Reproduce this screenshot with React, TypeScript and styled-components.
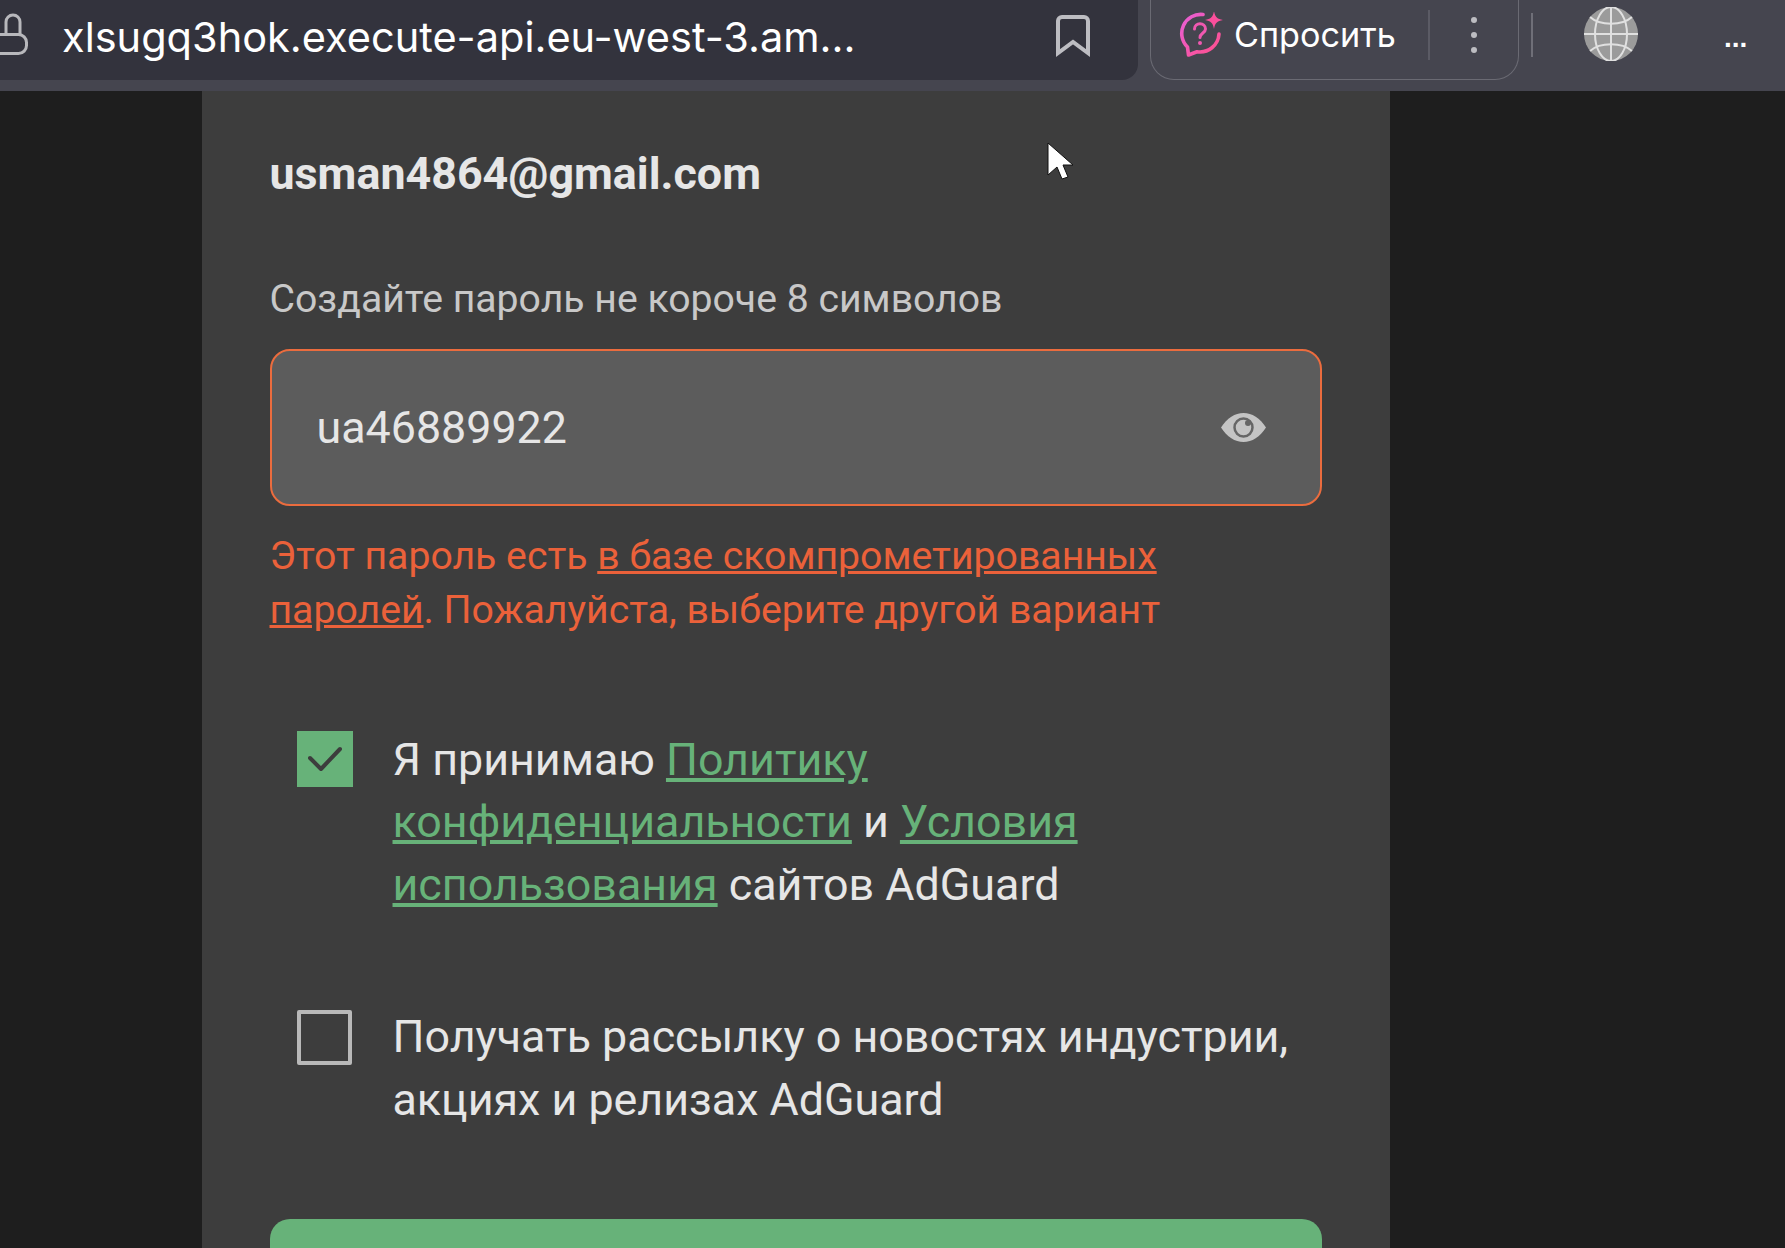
import * as React from 'react'
import styled, { createGlobalStyle } from 'styled-components'

const GlobalStyle = createGlobalStyle`
  html, body {
    margin: 0;
    padding: 0;
    background: #1e1e1e;
  }
  body {
    font-family: Roboto, "Liberation Sans", sans-serif;
  }
`

const Page = styled.div`
  position: relative;
  width: 1785px;
  height: 1248px;
  overflow: hidden;
  background: #1e1e1e;
`

const Toolbar = styled.header`
  display: flex;
  align-items: flex-start;
  height: 91px;
  background: #45454f;
`

const AddressBar = styled.div`
  display: flex;
  align-items: center;
  width: 1138px;
  height: 80px;
  flex: none;
  box-sizing: border-box;
  padding-bottom: 10px;
  background: #33333d;
  border-radius: 0 0 16px 0;
`

const Lock = styled.svg`
  width: 28px;
  height: 42px;
  flex: none;
  align-self: flex-start;
  margin-top: 13px;
`

const Url = styled.span`
  margin: 4px 0 0 34px;
  width: 992px;
  flex: none;
  font-family: Inter, "Noto Sans", sans-serif;
  font-size: 41.5px;
  color: #ffffff;
  white-space: nowrap;
`

const Bookmark = styled.svg`
  width: 38px;
  height: 44px;
  flex: none;
`

const AskGroup = styled.div`
  display: flex;
  align-items: center;
  width: 369px;
  height: 80px;
  margin-left: 12px;
  flex: none;
  box-sizing: border-box;
  border: 1px solid #6a6a73;
  border-top: none;
  border-radius: 0 0 24px 24px;
  padding: 0 0 10px 28px;
`

const AskIcon = styled.svg`
  width: 46px;
  height: 46px;
  flex: none;
`

const AskLabel = styled.span`
  margin-left: 9px;
  width: 162px;
  flex: none;
  font-family: Inter, "Noto Sans", sans-serif;
  font-size: 34.2px;
  color: #ffffff;
  white-space: nowrap;
`

const VerticalRule = styled.div<{ $h: number; $left?: number }>`
  flex: none;
  width: 2px;
  height: ${({ $h }) => $h}px;
  margin-left: ${({ $left = 0 }) => $left}px;
  background: ${({ $h }) => ($h > 45 ? '#5b5b65' : '#6f6f78')};
`

const Dots = styled.div`
  display: flex;
  flex-direction: column;
  gap: 9px;
  margin-left: 41px;
  flex: none;
`

const Dot = styled.span`
  width: 6px;
  height: 6px;
  border-radius: 50%;
  background: #bdbdc2;
`

const RuleSlot = styled.div`
  display: flex;
  align-items: center;
  height: 70px;
  margin-left: 12px;
  flex: none;
`

const Globe = styled.svg`
  width: 54px;
  height: 54px;
  margin: 7px 0 0 51px;
  flex: none;
`

const More = styled.span`
  margin: 20px 0 0 86px;
  font-family: "Liberation Sans", sans-serif;
  font-size: 28px;
  line-height: 36px;
  font-weight: 700;
  color: #ffffff;
  flex: none;
`

const Panel = styled.main`
  width: 1188px;
  height: 1157px;
  margin-left: 202px;
  box-sizing: border-box;
  padding: 57px 68px 0 67.5px;
  background: #3d3d3d;
  color: #e6e6e6;
`

const Email = styled.div`
  font-size: 44.8px;
  line-height: 52px;
  font-weight: 700;
`

const FieldLabel = styled.label`
  display: block;
  margin-top: 72px;
  font-size: 39.2px;
  line-height: 54px;
  color: #c8c8c8;
`

const Field = styled.div`
  display: flex;
  align-items: center;
  justify-content: space-between;
  height: 157px;
  margin-top: 23px;
  box-sizing: border-box;
  padding: 0 54px 0 45px;
  background: #5c5c5c;
  border: 2px solid #eb6c3e;
  border-radius: 20px;
  font-size: 44.8px;
  color: #e6e6e6;
`

const ErrorText = styled.p`
  margin: 23px 0 0;
  font-size: 39.2px;
  line-height: 54px;
  color: #eb613a;
`

const ErrorLink = styled.a`
  color: inherit;
  text-decoration: underline;
`

const CheckRow = styled.div<{ $top: number }>`
  display: flex;
  align-items: flex-start;
  margin-top: ${({ $top }) => $top}px;
  padding-left: 27px;
`

const CheckedBox = styled.div`
  display: flex;
  align-items: center;
  justify-content: center;
  width: 56px;
  height: 56px;
  flex: none;
  margin-top: 2px;
  background: #67b279;
`

const EmptyBox = styled.div`
  width: 55px;
  height: 55px;
  flex: none;
  margin: 4px 0.5px 0;
  box-sizing: border-box;
  border: 4px solid #b9b9b9;
  border-radius: 2px;
`

const CheckText = styled.div`
  margin-left: 40px;
  font-size: 44.8px;
  line-height: 62.4px;
  color: #e6e6e6;
`

const GreenLink = styled.a`
  color: #67b279;
  text-decoration: underline;
`

const SubmitButton = styled.button`
  display: block;
  width: 100%;
  height: 100px;
  margin-top: 88px;
  border: none;
  border-radius: 20px;
  background: #67b279;
`

const Cursor = styled.svg`
  position: absolute;
  left: 1047px;
  top: 142px;
  width: 27px;
  height: 38px;
`

export default function App() {
  return (
    <Page>
      <GlobalStyle />
      <Toolbar>
        <AddressBar>
          <Lock viewBox="0 0 28 42" fill="none" stroke="#b8b8bc" strokeWidth="3">
            <path d="M6 21V9a7 7 0 0 1 14 0v12" />
            <rect x="-12" y="21.5" width="38.5" height="19" rx="8" />
          </Lock>
          <Url>xlsugq3hok.execute-api.eu-west-3.am...</Url>
          <Bookmark viewBox="0 0 38 44" fill="none" stroke="#bdbdc2" strokeWidth="4">
            <path d="M4 40V8a4 4 0 0 1 4-4h22a4 4 0 0 1 4 4v32L19 29Z" />
          </Bookmark>
        </AddressBar>
        <AskGroup>
          <AskIcon viewBox="0 0 46 46" fill="none">
            <defs>
              <linearGradient id="askGradient" x1="0" y1="0" x2="1" y2="1">
                <stop offset="0" stopColor="#e85fd6" />
                <stop offset="1" stopColor="#ff4f8b" />
              </linearGradient>
            </defs>
            <path d="M24 2.5A19 19 0 0 0 8.5 35L9.5 43L18 39.7A19 19 0 0 0 40 22" stroke="url(#askGradient)" strokeWidth="3.6" strokeLinecap="round" strokeLinejoin="round" />
            <path d="M15.5 17c0-7 11-7 11 0 0 4-5.5 4-5.5 8.5" stroke="#f058b0" strokeWidth="3" strokeLinecap="round" />
            <circle cx="21" cy="31" r="2" fill="#f058b0" />
            <path d="M35 -1c1 6 3 8 9 9-6 1-8 3-9 9-1-6-3-8-9-9 6-1 8-3 9-9Z" fill="#fb4f9c" />
          </AskIcon>
          <AskLabel>Спросить</AskLabel>
          <VerticalRule $h={50} $left={32} />
          <Dots>
            <Dot />
            <Dot />
            <Dot />
          </Dots>
        </AskGroup>
        <RuleSlot>
          <VerticalRule $h={44} />
        </RuleSlot>
        <Globe viewBox="0 0 54 54" fill="#9b9b9b" stroke="#e0e0e0" strokeWidth="2">
          <circle cx="27" cy="27" r="27" stroke="none" />
          <path d="M0 27h54M27 0v54" fill="none" />
          <ellipse cx="27" cy="27" rx="16" ry="27" fill="none" />
          <path d="M6 10c10 9 32 9 42 0M6 44c10-9 32-9 42 0" fill="none" />
        </Globe>
        <More>...</More>
      </Toolbar>
      <Panel>
        <Email>usman4864@gmail.com</Email>
        <FieldLabel>Создайте пароль не короче 8 символов</FieldLabel>
        <Field>
          ua46889922
          <svg width="45" height="29" viewBox="0 0 45 29">
            <path d="M0 14.5C6 5 14 0 22.5 0S39 5 45 14.5C39 24 31 29 22.5 29S6 24 0 14.5Z" fill="#c4c4c4" />
            <circle cx="22.5" cy="14.5" r="9" fill="#c4c4c4" stroke="#666666" strokeWidth="2.5" />
            <circle cx="27" cy="10" r="3" fill="#666666" />
          </svg>
        </Field>
        <ErrorText>
          Этот пароль есть <ErrorLink>в базе скомпрометированных паролей</ErrorLink>. Пожалуйста, выберите другой вариант
        </ErrorText>
        <CheckRow $top={92}>
          <CheckedBox>
            <svg width="34" height="26" viewBox="0 0 34 26" fill="none" stroke="#3d3d3d" strokeWidth="4" strokeLinecap="round" strokeLinejoin="round">
              <path d="M2 12l11 11L32 3" />
            </svg>
          </CheckedBox>
          <CheckText>
            Я принимаю <GreenLink>Политику конфиденциальности</GreenLink> и <GreenLink>Условия использования</GreenLink> сайтов AdGuard
          </CheckText>
        </CheckRow>
        <CheckRow $top={90}>
          <EmptyBox />
          <CheckText>Получать рассылку о новостях индустрии, акциях и релизах AdGuard</CheckText>
        </CheckRow>
        <SubmitButton />
      </Panel>
      <Cursor viewBox="0 0 27 38">
        <path d="M1 1v32l9-8 5 12 6-2-5-12h10Z" fill="#ffffff" stroke="#111" strokeWidth="1" />
      </Cursor>
    </Page>
  )
}
